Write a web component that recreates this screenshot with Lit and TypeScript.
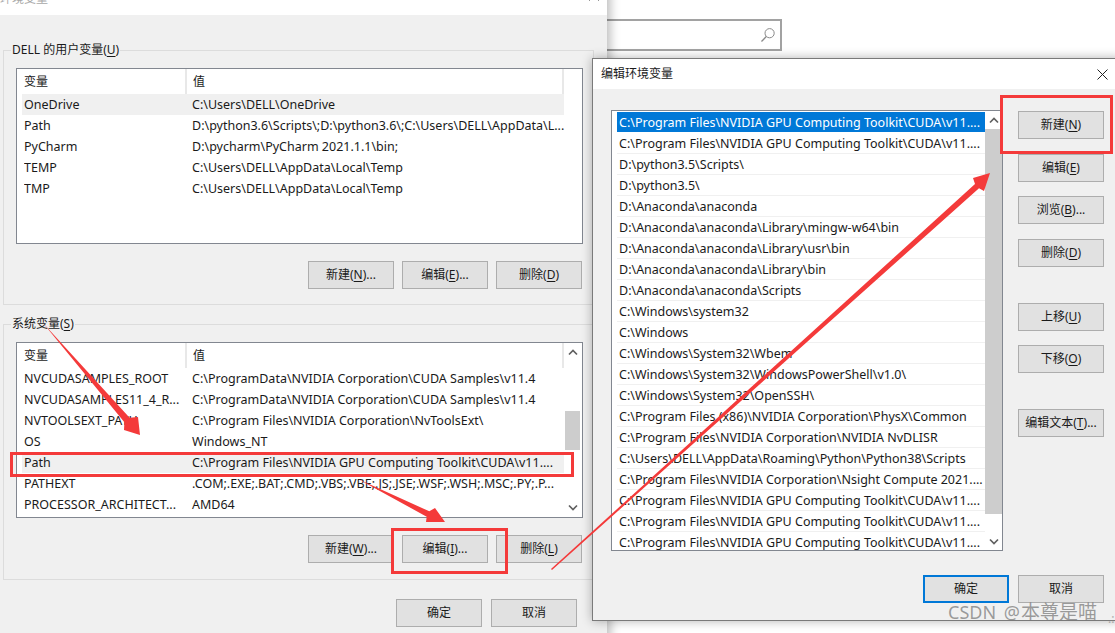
import { LitElement, html, css, svg, nothing } from "lit";
import { customElement } from "lit/decorators.js";

const label = (text: string, key = "", tail = "") =>
  key ? html`${text}(<u>${key}</u>)${tail}` : html`${text}`;

const chevron = (up: boolean) => html`<svg class="chev" width="10" height="7" viewBox="0 0 10 7">
  <path d=${up ? "M1 5.5 5 1.5 9 5.5" : "M1 1.5 5 5.5 9 1.5"} fill="none" stroke="#606060" stroke-width="1.7"/></svg>`;

const userRows = [
  ["OneDrive", "C:\\Users\\DELL\\OneDrive", true],
  ["Path", "D:\\python3.6\\Scripts\\;D:\\python3.6\\;C:\\Users\\DELL\\AppData\\L..."],
  ["PyCharm", "D:\\pycharm\\PyCharm 2021.1.1\\bin;"],
  ["TEMP", "C:\\Users\\DELL\\AppData\\Local\\Temp"],
  ["TMP", "C:\\Users\\DELL\\AppData\\Local\\Temp"],
];
const sysRows = [
  ["NVCUDASAMPLES_ROOT", "C:\\ProgramData\\NVIDIA Corporation\\CUDA Samples\\v11.4"],
  ["NVCUDASAMPLES11_4_R...", "C:\\ProgramData\\NVIDIA Corporation\\CUDA Samples\\v11.4"],
  ["NVTOOLSEXT_PATH", "C:\\Program Files\\NVIDIA Corporation\\NvToolsExt\\"],
  ["OS", "Windows_NT"],
  ["Path", "C:\\Program Files\\NVIDIA GPU Computing Toolkit\\CUDA\\v11....", true],
  ["PATHEXT", ".COM;.EXE;.BAT;.CMD;.VBS;.VBE;.JS;.JSE;.WSF;.WSH;.MSC;.PY;.P..."],
  ["PROCESSOR_ARCHITECT...", "AMD64"],
];
const cuda = "C:\\Program Files\\NVIDIA GPU Computing Toolkit\\CUDA\\v11....";
const pathRows = [
  cuda, cuda,
  "D:\\python3.5\\Scripts\\",
  "D:\\python3.5\\",
  "D:\\Anaconda\\anaconda",
  "D:\\Anaconda\\anaconda\\Library\\mingw-w64\\bin",
  "D:\\Anaconda\\anaconda\\Library\\usr\\bin",
  "D:\\Anaconda\\anaconda\\Library\\bin",
  "D:\\Anaconda\\anaconda\\Scripts",
  "C:\\Windows\\system32",
  "C:\\Windows",
  "C:\\Windows\\System32\\Wbem",
  "C:\\Windows\\System32\\WindowsPowerShell\\v1.0\\",
  "C:\\Windows\\System32\\OpenSSH\\",
  "C:\\Program Files (x86)\\NVIDIA Corporation\\PhysX\\Common",
  "C:\\Program Files\\NVIDIA Corporation\\NVIDIA NvDLISR",
  "C:\\Users\\DELL\\AppData\\Roaming\\Python\\Python38\\Scripts",
  "C:\\Program Files\\NVIDIA Corporation\\Nsight Compute 2021....",
  cuda, cuda, cuda,
];

@customElement("app-root")
export class AppRoot extends LitElement {
  static styles = css`
    :host {
      display: block;
      position: relative;
      width: 1115px;
      height: 633px;
      overflow: hidden;
      background: #fff;
      font: 12px/16px "Noto Sans", "Noto Sans CJK SC", sans-serif;
      color: #1a1a1a;
    }
    u { text-underline-offset: 2px; }
    .search {
      position: absolute; left: 560px; top: 19px; width: 222px; height: 32px;
      box-sizing: border-box; border: 2px solid #a2a2a2;
      display: flex; align-items: center; justify-content: flex-end; padding-right: 4px;
    }
    .win {
      position: absolute; box-sizing: border-box; background: #f0f0f0;
      display: flex; flex-direction: column;
    }
    .env {
      left: 0; top: -15px; width: 607px; height: 660px;
      box-shadow: 3px 0 10px rgba(0,0,0,.28); padding: 0 13px 0 3px;
    }
    .env .title {
      height: 30px; margin: 0 -13px 0 -3px; background: #fff; flex: none; color: #a8a8a8;
      display: flex; justify-content: space-between; padding: 6px 8px 0 0; box-sizing: border-box;
    }
    fieldset {
      margin: 0; padding: 0 10px 0 12px; border: 1px solid #dcdcdc; min-width: 0;
      display: flex; flex-direction: column; flex: none;
    }
    legend { padding: 0 1px; margin-left: -5px; line-height: 16px; height: 16px; }
    .g1 { margin-top: 27px; height: 263px; box-sizing: border-box; }
    .g2 { margin-top: 11px; height: 264px; box-sizing: border-box; }
    .listbox {
      margin-top: 10px; height: 176px; box-sizing: border-box; border: 1px solid #828790;
      background: #fff; display: flex; overflow: hidden; flex: none;
    }
    .table { flex: 1; min-width: 0; }
    .thead { height: 25px; display: flex; padding-left: 7px; line-height: 26px; }
    .thead .n { width: 161px; border-right: 2px solid #e8e8e8; box-sizing: content-box; }
    .thead .v { flex: 1; padding-left: 6px; border-right: 2px solid #e8e8e8; }
    .tr { height: 21px; line-height: 21px; display: flex; margin-left: 5px; padding-left: 2px; white-space: nowrap; font-size: 12.5px; }
    .tr .n { width: 168px; flex: none; overflow: hidden; }
    .tr.sel { background: #f0f0f0; }
    .vbar {
      width: 18px; flex: none; display: flex; flex-direction: column; align-items: center;
      justify-content: space-between; padding: 6px 0 6px; box-sizing: border-box; position: relative;
    }
    .listbox .thumb { position: absolute; left: 1px; right: 2px; top: 68px; height: 39px; background: #cdcdcd; }
    .btns { display: flex; gap: 8px; justify-content: flex-end; margin-top: 17px; padding-right: 1px; }
    .btn {
      width: 86px; height: 28px; box-sizing: border-box; border: 1px solid #adadad; background: #e1e1e1;
      display: flex; align-items: center; justify-content: center; white-space: nowrap; flex: none;
    }
    .btn.def { border: 2px solid #0078d7; }
    .foot { display: flex; justify-content: flex-end; gap: 9px; margin-top: 19px; padding-right: 17px; }
    .edit {
      left: 592px; top: 58px; width: 530px; height: 563px; border: 1px solid #7a7a7a;
      box-shadow: 0 0 10px rgba(0,0,0,.3);
    }
    .edit .title {
      height: 30px; background: #fff; flex: none; display: flex; align-items: center; justify-content: space-between;
      padding: 0 13px 0 8px; box-sizing: border-box;
    }
    .ebody { display: flex; flex: 1; min-height: 0; padding: 21px 0 0 18px; gap: 15px; }
    .elist {
      width: 392px; height: 441px; box-sizing: border-box; border: 1px solid #828790; background: #fff;
      display: flex; overflow: hidden; flex: none; padding: 1px 0 0 5px; position: relative;
    }
    .erows { width: 368px; flex: none; }
    .er {
      height: 21px; box-sizing: border-box; border-bottom: 1px solid #f0f0f0; padding-left: 2px;
      line-height: 22px; white-space: nowrap; overflow: hidden; font-size: 12.5px;
    }
    .er.sel { background: #0078d7; color: #fff; border-bottom-color: #fff; }
    .ebar {
      width: 17px; margin-top: -1px; flex: none; display: flex; flex-direction: column; align-items: center;
      align-self: flex-start;
    }
    .ebar .cap { height: 18px; flex: none; display: flex; align-items: center; justify-content: center; width: 100%; }
    .ebar .thumb { height: 385px; flex: none; width: 100%; background: #cdcdcd; margin-bottom: 18px; }
    .side { display: flex; flex-direction: column; width: 86px; flex: none; padding-top: 1px; }
    .side .btn { margin-bottom: 15px; }
    .side .btn.tight { margin-bottom: 14px; }
    .side .btn.far { margin-bottom: 36px; }
    .efoot { display: flex; gap: 9px; position: absolute; left: 330px; top: 516px; }
    .overlay { position: absolute; left: 0; top: 0; pointer-events: none; }
    .mark {
      position: absolute; left: 948px; top: 600px; font-size: 18px; line-height: 25px; white-space: nowrap;
      color: rgba(120,120,120,.72); word-spacing: 3px;
    }
    .mark span { font-size: 19px; margin-left: 1px; }
    .dots { position: absolute; left: 1108px; top: 613px; color: #aaa; font-size: 12px; line-height: 12px; }
  `;

  private table(rows: any[], bar: boolean) {
    return html`<div class="listbox">
      <div class="table">
        <div class="thead"><div class="n">变量</div><div class="v">值</div></div>
        ${rows.map((r) => html`<div class="tr ${r[2] ? "sel" : ""}"><div class="n">${r[0]}</div><div>${r[1]}</div></div>`)}
      </div>
      <div class="vbar">${bar
        ? html`${chevron(true)}<div class="thumb"></div>${chevron(false)}`
        : nothing}</div>
    </div>`;
  }

  render() {
    const red = "#f43a3a";
    return html`
      <div class="search">
        <svg width="16" height="16" viewBox="0 0 16 16">
          <circle cx="9.6" cy="6.2" r="4.6" fill="none" stroke="#8a8a8a" stroke-width="1"/>
          <path d="M6.3 9.5 1.5 14.5" stroke="#8a8a8a" stroke-width="1.3" fill="none"/>
        </svg>
      </div>

      <div class="win env">
        <div class="title"><span>环境变量</span>
          <svg width="10" height="10" viewBox="0 0 10 10"><path d="M0 0 10 10M10 0 0 10" stroke="#999" fill="none"/></svg>
        </div>
        <fieldset class="g1">
          <legend>DELL 的用户变量(<u>U</u>)</legend>
          ${this.table(userRows, false)}
          <div class="btns">
            <div class="btn">${label("新建", "N", "...")}</div>
            <div class="btn">${label("编辑", "E", "...")}</div>
            <div class="btn">${label("删除", "D")}</div>
          </div>
        </fieldset>
        <fieldset class="g2">
          <legend>系统变量(<u>S</u>)</legend>
          ${this.table(sysRows, true)}
          <div class="btns">
            <div class="btn">${label("新建", "W", "...")}</div>
            <div class="btn">${label("编辑", "I", "...")}</div>
            <div class="btn">${label("删除", "L")}</div>
          </div>
        </fieldset>
        <div class="foot">
          <div class="btn">确定</div>
          <div class="btn">取消</div>
        </div>
      </div>

      <div class="win edit">
        <div class="title"><span>编辑环境变量</span>
          <svg width="11" height="11" viewBox="0 0 11 11"><path d="M.5 .5 10.5 10.5M10.5 .5 .5 10.5" stroke="#222" stroke-width="1" fill="none"/></svg>
        </div>
        <div class="ebody">
          <div class="elist">
            <div class="erows">${pathRows.map((p, i) => html`<div class="er ${i === 0 ? "sel" : ""}">${p}</div>`)}</div>
            <div class="ebar">
              <div class="cap">${chevron(true)}</div>
              <div class="thumb"></div>
              <div class="cap">${chevron(false)}</div>
            </div>
          </div>
          <div class="side">
            <div class="btn">${label("新建", "N")}</div>
            <div class="btn tight">${label("编辑", "E")}</div>
            <div class="btn">${label("浏览", "B", "...")}</div>
            <div class="btn far">${label("删除", "D")}</div>
            <div class="btn tight">${label("上移", "U")}</div>
            <div class="btn far">${label("下移", "O")}</div>
            <div class="btn">${label("编辑文本", "T", "...")}</div>
          </div>
        </div>
        <div class="efoot">
          <div class="btn def">确定</div>
          <div class="btn">取消</div>
        </div>
      </div>

      <div class="mark">CSDN @<span>本尊是喵</span></div>
      <div class="dots">.:</div>

      <svg class="overlay" width="1115" height="633" viewBox="0 0 1115 633">
        ${svg`
          <g fill="none" stroke=${red} stroke-width="3">
            <rect x="11.5" y="453.5" width="561" height="22"/>
            <rect x="392.5" y="529.5" width="114" height="43"/>
            <rect x="1001.5" y="96.5" width="110" height="56"/>
          </g>
          <g fill=${red}>
            <path d="M43 323 129.6 417.7 138 417 140 435 124 430 124.4 422.3Z"/>
            <path d="M358 479 429.3 511.3 435 508 445 522 426 522 426.7 516.7Z"/>
            <path d="M551 569 975 184 973 178 990 173 984 191 979 188.2 552 570Z"/>
          </g>
        `}
      </svg>
    `;
  }
}
